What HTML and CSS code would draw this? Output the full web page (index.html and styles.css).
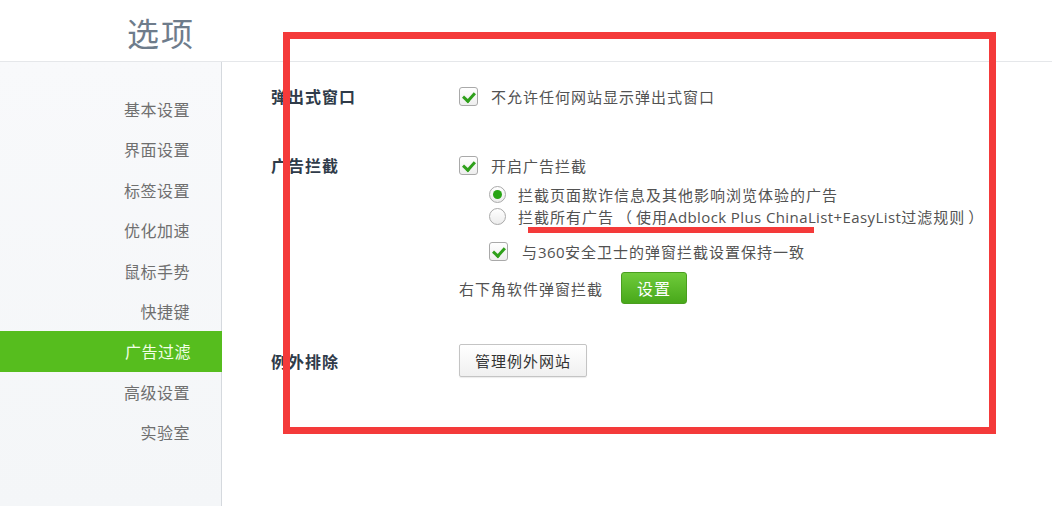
FILE: index.html
```html
<!DOCTYPE html>
<html lang="zh-CN">
<head>
<meta charset="utf-8">
<title>选项</title>
<link rel="stylesheet" href="styles.css">
</head>
<body>
<div class="page">
  <header class="header"><h1 class="title">选项</h1></header>
  <div class="body">
    <nav class="sidebar">
      <a class="nav-item">基本设置</a>
      <a class="nav-item">界面设置</a>
      <a class="nav-item">标签设置</a>
      <a class="nav-item">优化加速</a>
      <a class="nav-item">鼠标手势</a>
      <a class="nav-item">快捷键</a>
      <a class="nav-item active">广告过滤</a>
      <a class="nav-item">高级设置</a>
      <a class="nav-item">实验室</a>
    </nav>
    <main class="content">
      <section class="row row-popup">
        <div class="label">弹出式窗口</div>
        <div class="controls">
          <label class="line"><span class="checkbox checked"></span><span class="txt">不允许任何网站显示弹出式窗口</span></label>
        </div>
      </section>
      <section class="row row-ads">
        <div class="label">广告拦截</div>
        <div class="controls">
          <label class="line"><span class="checkbox checked"></span><span class="txt">开启广告拦截</span></label>
          <div class="sub">
            <label class="line tight"><span class="radio checked"></span><span class="txt rtxt">拦截页面欺诈信息及其他影响浏览体验的广告</span></label>
            <label class="line tight"><span class="radio"></span><span class="txt rtxt">拦截所有广告<span class="paren">（</span>使用<span class="en">Adblock Plus ChinaList+EasyList</span>过滤规则<span class="paren">）</span></span></label>
            <label class="line sync"><span class="checkbox checked"></span><span class="txt ctxt">与<span class="en">360</span>安全卫士的弹窗拦截设置保持一致</span></label>
          </div>
          <div class="line corner"><span class="txt">右下角软件弹窗拦截</span><button class="btn-green">设置</button></div>
        </div>
      </section>
      <section class="row row-except">
        <div class="label">例外排除</div>
        <div class="controls">
          <button class="btn-plain">管理例外网站</button>
        </div>
      </section>
    </main>
  </div>
  <div class="annot-box"></div>
  <div class="annot-underline"></div>
</div>
</body>
</html>
```

FILE: styles.css
```css
* { box-sizing: border-box; }
html, body { margin: 0; padding: 0; background: #fff; }
body {
  width: 1052px;
  height: 506px;
  overflow: hidden;
  font-family: "Noto Sans CJK SC", "Noto Sans", sans-serif;
}
.page { position: relative; width: 1052px; height: 506px; }
.header {
  height: 62px;
  border-bottom: 1px solid #e5e7ea;
  padding-left: 127px;
}
.title {
  margin: 0;
  font-size: 32px;
  font-weight: 400;
  letter-spacing: 2px;
  line-height: 64px;
  color: #6e7c8b;
}
.body { display: flex; height: 444px; }
.sidebar {
  width: 222px;
  flex: none;
  background: linear-gradient(#f8f9fb, #f4f6f8);
  border-right: 1px solid #d5d9de;
  padding-top: 27px;
  display: flex;
  flex-direction: column;
}
.nav-item {
  display: block;
  height: 40.4px;
  line-height: 40px;
  text-align: right;
  padding-right: 31px;
  font-size: 16px;
  letter-spacing: 0.5px;
  color: #6f6f6f;
}
.nav-item.active {
  background: #56bd1e;
  color: #f2ffe6;
  margin-right: -1px;
}
.content { flex: 1; padding-left: 49px; padding-top: 23px; }
.row { display: flex; }
.label {
  width: 188px;
  flex: none;
  font-size: 16px;
  font-weight: 700;
  letter-spacing: 1px;
  color: #2f3b49;
  line-height: 22px;
}
.controls { display: flex; flex-direction: column; }
.line {
  display: flex;
  align-items: center;
  height: 22px;
}
.txt {
  font-size: 15px;
  letter-spacing: 1px;
  color: #525252;
  white-space: nowrap;
}
.paren { margin: 0 3px; }
.en {
  font-family: "Open Sans", "Noto Sans", sans-serif;
  letter-spacing: 0.4px;
}
.checkbox {
  width: 19px;
  height: 19px;
  flex: none;
  border: 1px solid #a9a9a9;
  border-radius: 3px;
  background: linear-gradient(#ffffff, #eeeeee);
  margin-right: 13px;
  position: relative;
}
.checkbox.checked::after {
  content: "";
  position: absolute;
  left: 5px;
  top: 2px;
  width: 5px;
  height: 9px;
  border-right: 3px solid #2fa01b;
  border-bottom: 3px solid #2fa01b;
  transform: rotate(42deg);
}
.radio {
  width: 17px;
  height: 17px;
  flex: none;
  border: 1px solid #a9a9a9;
  border-radius: 50%;
  background: linear-gradient(#ffffff, #ececec);
  margin-right: 12px;
  position: relative;
}
.radio.checked::after {
  content: "";
  position: absolute;
  left: 3px;
  top: 3px;
  width: 9px;
  height: 9px;
  border-radius: 50%;
  background: #27a414;
}
.row-ads { margin-top: 47px; }
.sub { padding-left: 30px; margin-top: 7px; }
.sync { margin-top: 13px; }
.sync .checkbox { margin-right: 14px; }
.corner { height: 32px; margin-top: 10px; }
.btn-green {
  margin-left: 18px;
  width: 66px;
  height: 32px;
  border: 1px solid #4a9e1f;
  border-radius: 3px;
  background: linear-gradient(#6fcb3b, #48a81a);
  color: #fff;
  font-family: inherit;
  font-size: 16px;
  letter-spacing: 1px;
  padding: 0;
}
.row-except { margin-top: 40px; align-items: center; }
.btn-plain {
  width: 128px;
  height: 33px;
  border: 1px solid #c4c4c4;
  border-radius: 2px;
  background: linear-gradient(#ffffff, #f0f0f0);
  color: #333;
  font-family: inherit;
  font-size: 15px;
  letter-spacing: 1px;
  padding: 0;
  box-shadow: 0 1px 1px rgba(0,0,0,0.08);
}
.annot-box {
  position: absolute;
  left: 283px;
  top: 32px;
  width: 713px;
  height: 402px;
  border: 7px solid #f43a3a;
}
.annot-underline {
  position: absolute;
  left: 528px;
  top: 227px;
  width: 286px;
  height: 6px;
  background: #f43a3a;
}
```
